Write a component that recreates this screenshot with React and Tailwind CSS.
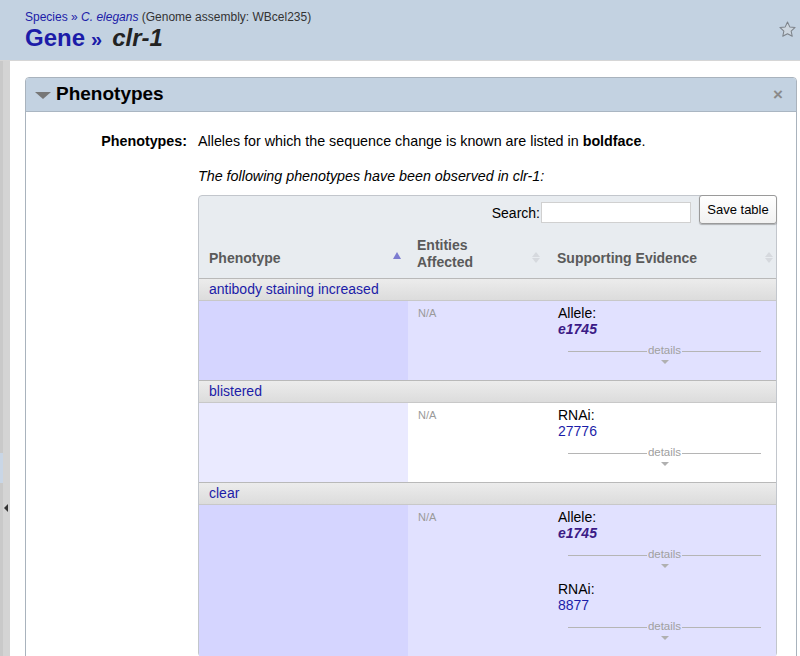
import React from "react";

const LINK = "text-[#1c1ca8]";
const VISITED = "text-[#3b1a86]";

const SortBoth = () => (
  <div className="flex flex-col items-center gap-[1px]">
    <div className="w-0 h-0 border-x-[4px] border-x-transparent border-b-[5px] border-b-[#d6d9de]" />
    <div className="w-0 h-0 border-x-[4px] border-x-transparent border-t-[5px] border-t-[#d6d9de]" />
  </div>
);

const Details = () => (
  <div className="ml-[10px] w-[193px]">
    <div className="flex items-center h-[14px] mt-[7px]">
      <div className="flex-1 h-px bg-[#b5b5b5]" />
      <span className="text-[11.5px] text-[#a0a0a0] px-[1px] leading-none">details</span>
      <div className="flex-1 h-px bg-[#b5b5b5]" />
    </div>
    <div className="flex justify-center h-[8px] items-center">
      <div className="w-0 h-0 border-x-[4px] border-x-transparent border-t-[4px] border-t-[#b0b0b0]" />
    </div>
  </div>
);

const Evidence = ({ label, value, allele }) => (
  <div className="mb-[11px]">
    <div className="leading-4 text-[14px] text-black">{label}</div>
    <div
      className={
        allele
          ? `leading-4 text-[14px] font-bold italic ${VISITED}`
          : `leading-4 text-[14px] ${LINK}`
      }
    >
      {value}
    </div>
    <Details />
  </div>
);

const Group = ({ name, c1, c2, evidence }) => (
  <>
    <div className="h-[22px] flex items-center px-[10px] border-t border-[#b9b9b9] bg-gradient-to-b from-[#ececec] to-[#dcdcdc]">
      <span className={`text-[14px] ${LINK}`}>{name}</span>
    </div>
    <div className="flex border-t border-[#c8c8c8]">
      <div className={`w-[209px] ${c1}`} />
      <div className={`w-[140px] px-[10px] pt-[4px] ${c2}`}>
        <div className="text-[11px] leading-4 text-[#9a9a9a]">N/A</div>
      </div>
      <div className={`flex-1 pl-[10px] pt-[4px] pb-[3px] ${c2}`}>
        {evidence.map((e, i) => (
          <Evidence key={i} {...e} />
        ))}
      </div>
    </div>
  </>
);

export default function App() {
  const groups = [
    {
      name: "antibody staining increased",
      c1: "bg-[#d5d5ff]",
      c2: "bg-[#e1e1ff]",
      evidence: [{ label: "Allele:", value: "e1745", allele: true }],
    },
    {
      name: "blistered",
      c1: "bg-[#eaeaff]",
      c2: "bg-white",
      evidence: [{ label: "RNAi:", value: "27776" }],
    },
    {
      name: "clear",
      c1: "bg-[#d5d5ff]",
      c2: "bg-[#e1e1ff]",
      evidence: [
        { label: "Allele:", value: "e1745", allele: true },
        { label: "RNAi:", value: "8877" },
      ],
    },
  ];

  return (
    <div
      className="w-[800px] h-[656px] overflow-hidden bg-white flex flex-col"
      style={{ fontFamily: '"Liberation Sans", Arial, sans-serif' }}
    >
      {/* page header */}
      <header className="h-[61px] shrink-0 bg-[#c3d2e1] border-b border-[#d6d6d6] flex items-start justify-between pl-[25px] pr-[3px]">
        <div className="pt-[10px]">
          <div className="text-[12px] leading-[14px] text-[#333]">
            <span className={LINK}>Species</span>
            <span className={LINK}> » </span>
            <span className={`${LINK} italic`}>C. elegans</span> (Genome assembly: WBcel235)
          </div>
          <div className="flex items-baseline leading-[28px]">
            <span className={`text-[24px] font-bold ${LINK}`}>Gene</span>
            <span className={`text-[20px] font-bold ${LINK} ml-[6px] mr-[10px]`}>»</span>
            <span className="text-[24px] font-bold italic text-[#222]">clr-1</span>
          </div>
        </div>
        <svg width="19" height="19" viewBox="0 0 24 24" className="mt-[20px]">
          <path
            d="M12 2.5l2.9 6.2 6.7.7-5 4.6 1.4 6.6L12 17.3l-6 3.3 1.4-6.6-5-4.6 6.7-.7z"
            fill="#cdd6df"
            stroke="#7d838a"
            strokeWidth="1.3"
            strokeLinejoin="round"
          />
        </svg>
      </header>

      <div className="flex flex-1 min-h-0">
        {/* left sidebar strip */}
        <div className="flex shrink-0 relative">
          <div className="w-[3px] bg-[#c9c9c9] flex flex-col">
            <div className="h-[392px]" />
            <div className="h-[30px] bg-[#c9d6e6]" />
          </div>
          <div className="w-[7px] bg-[#d4d4d4]" />
          <div className="absolute left-[4px] top-[443px] w-0 h-0 border-y-[4px] border-y-transparent border-r-[4px] border-r-[#333]" />
        </div>

        {/* main */}
        <div className="flex-1 pl-[15px] pr-[3px] pt-[16px]">
          <div className="border border-[#a9b3bd] rounded-t-[4px] overflow-hidden">
            <div className="h-[34px] bg-[#c3d2e1] border-b border-[#aab6c2] flex items-center pl-[9px] pr-[13px]">
              <div className="w-0 h-0 border-x-[8px] border-x-transparent border-t-[7px] border-t-[#777] mt-[1px]" />
              <span className="ml-[5px] text-[19px] font-bold text-black">Phenotypes</span>
              <span className="ml-auto text-[17px] font-bold text-[#8a8a8a]">×</span>
            </div>

            <div className="flex pt-[20px] h-[600px]">
              <div className="w-[161px] text-right text-[14.3px] font-bold text-black leading-[18px]">
                Phenotypes:
              </div>
              <div className="ml-[11px] w-[579px]">
                <div className="text-[14.3px] leading-[18px] text-black">
                  Alleles for which the sequence change is known are listed in <b>boldface</b>.
                </div>
                <div className="text-[14.3px] leading-[18px] italic text-black mt-[17px]">
                  The following phenotypes have been observed in clr-1:
                </div>

                <div className="mt-[10px] border border-[#c2c6cc] rounded-[4px] bg-[#e8ecf0]">
                  <div className="flex items-start justify-end h-[33px]">
                    <span className="text-[14px] text-black mt-[7px]">Search:</span>
                    <input className="w-[150px] h-[21px] bg-white border border-[#d0d0d0] mt-[6px] ml-[1px] outline-none" />
                    <button className="ml-[8px] -mt-px -mr-px h-[29px] w-[78px] bg-gradient-to-b from-white to-[#f1f1f1] border border-[#9a9a9a] rounded-[3px] shadow-[0_1px_1px_rgba(0,0,0,0.25)] text-[13px] text-black">
                      Save table
                    </button>
                  </div>
                  <div className="flex h-[49px] items-center text-[14px] font-bold text-[#5a5a5a] leading-[17px]">
                    <div className="w-[208px] flex items-center pl-[10px] pr-[6px]">
                      <span className="mt-[9px]">Phenotype</span>
                      <div className="ml-auto mt-[3px] w-0 h-0 border-x-[4px] border-x-transparent border-b-[7px] border-b-[#7b7bd0]" />
                    </div>
                    <div className="w-[140px] flex items-center pl-[10px] pr-[7px]">
                      <span>
                        Entities
                        <br />
                        Affected
                      </span>
                      <div className="ml-auto mt-[8px]">
                        <SortBoth />
                      </div>
                    </div>
                    <div className="flex-1 flex items-center pl-[10px] pr-[3px]">
                      <span className="mt-[9px]">Supporting Evidence</span>
                      <div className="ml-auto mt-[8px]">
                        <SortBoth />
                      </div>
                    </div>
                  </div>
                  {groups.map((g, i) => (
                    <Group key={i} {...g} />
                  ))}
                </div>
              </div>
            </div>
          </div>
        </div>
      </div>
    </div>
  );
}
